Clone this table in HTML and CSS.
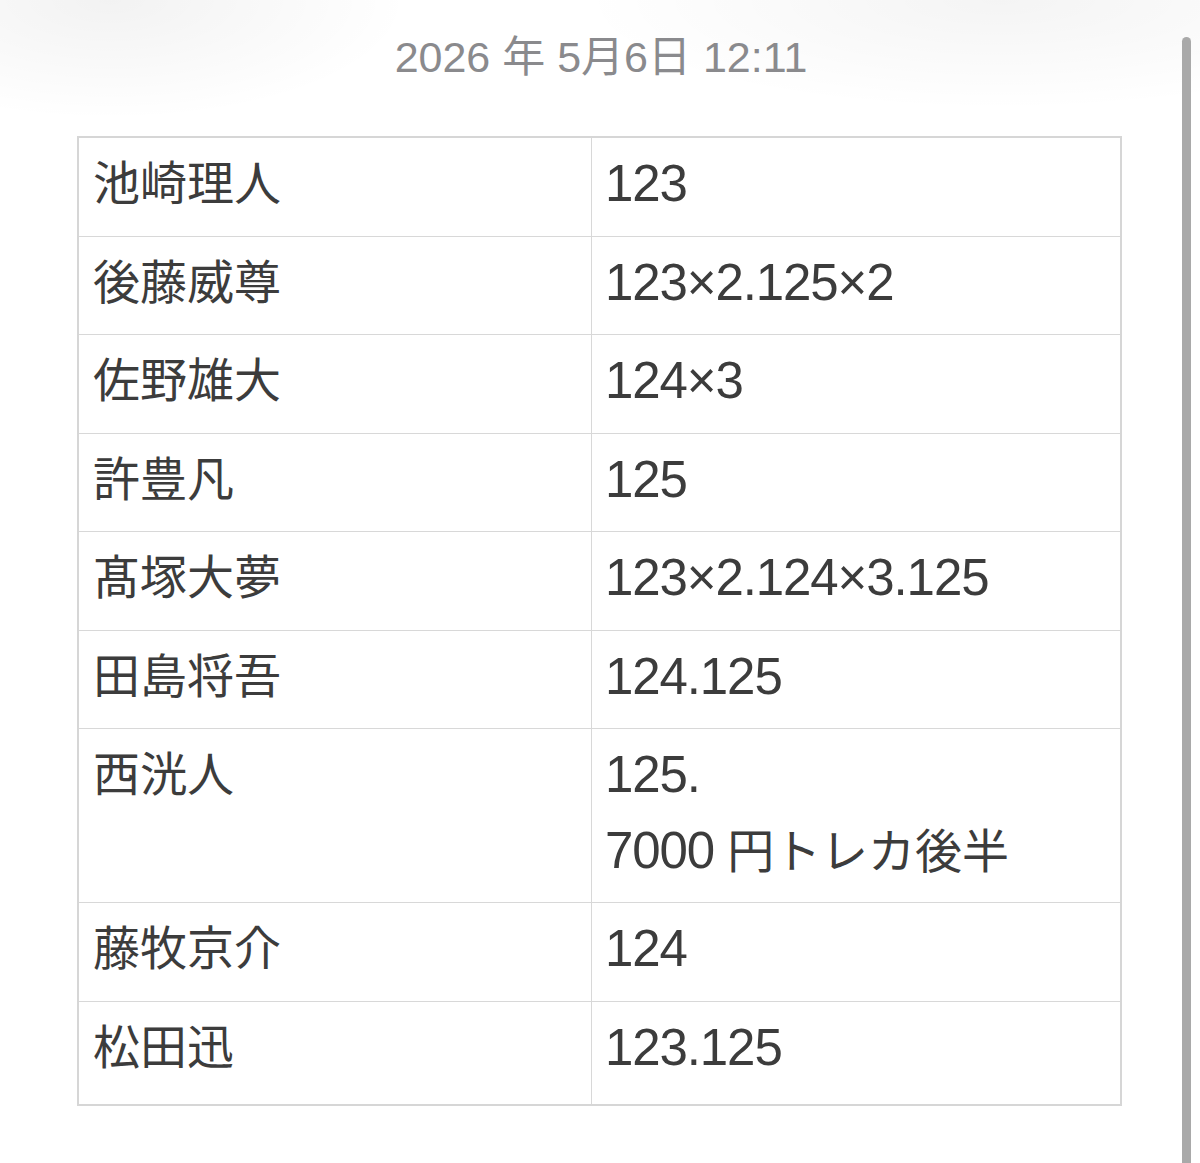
FILE: index.html
```html
<!DOCTYPE html>
<html lang="ja">
<head>
<meta charset="utf-8">
<title>メモ</title>
<link rel="stylesheet" href="styles.css">
</head>
<body>
<div class="page">
  <div class="date">2026 年 5月6日 12:11</div>
  <table class="sheet">
    <tr><td class="name">池崎理人</td><td class="val">123</td></tr>
    <tr><td class="name">後藤威尊</td><td class="val">123×2.125×2</td></tr>
    <tr><td class="name">佐野雄大</td><td class="val">124×3</td></tr>
    <tr><td class="name">許豊凡</td><td class="val">125</td></tr>
    <tr><td class="name">髙塚大夢</td><td class="val">123×2.124×3.125</td></tr>
    <tr><td class="name">田島将吾</td><td class="val">124.125</td></tr>
    <tr><td class="name">西洸人</td><td class="val">125.<br>7000 <span class="jp">円トレカ後半</span></td></tr>
    <tr><td class="name">藤牧京介</td><td class="val">124</td></tr>
    <tr class="last"><td class="name">松田迅</td><td class="val">123.125</td></tr>
  </table>
</div>
<div class="scrollbar"></div>
</body>
</html>
```
FILE: styles.css
```css
html, body {
  margin: 0;
  padding: 0;
}
body {
  width: 1200px;
  height: 1163px;
  overflow: hidden;
  position: relative;
  background:
    radial-gradient(ellipse 300px 120px at 110px 0px, rgba(0,0,0,0.05), rgba(0,0,0,0) 100%),
    radial-gradient(ellipse 420px 110px at 1000px 0px, rgba(0,0,0,0.045), rgba(0,0,0,0) 100%),
    #ffffff;
  font-family: "Noto Sans CJK JP", "Noto Sans", sans-serif;
}
.page {
  display: flex;
  flex-direction: column;
  align-items: flex-start;
  padding-top: 31px;
}
.date {
  align-self: stretch;
  text-align: center;
  font-family: "Liberation Sans", "Noto Sans CJK JP", sans-serif;
  font-size: 43px;
  line-height: 53px;
  color: #8a8a8d;
  padding-left: 2px;
}
.sheet {
  margin-top: 52px;
  margin-left: 77px;
  width: 1045px;
  border-collapse: collapse;
  border: 2px solid #d6d6d6;
  color: #3c3c3c;
  line-height: 75.5px;
}
.sheet td {
  border: 1px solid #d8d8d8;
  vertical-align: top;
  font-weight: 400;
}
.sheet td.name {
  width: 482px;
  padding: 4px 16px 18px 14px;
  font-size: 47px;
  font-family: "Noto Sans CJK JP", sans-serif;
}
.sheet td.val {
  padding: 8px 16px 14px 13px;
  font-size: 51px;
  letter-spacing: -1.1px;
  font-family: "Liberation Sans", "Noto Sans CJK JP", sans-serif;
}
.sheet .last td.name {
  padding-bottom: 23px;
}
.sheet .last td.val {
  padding-bottom: 19px;
}
.sheet .jp {
  font-family: "Noto Sans CJK JP", sans-serif;
  font-size: 47px;
  letter-spacing: 0;
  line-height: 1;
}
.scrollbar {
  position: absolute;
  left: 1182px;
  top: 37px;
  width: 9px;
  bottom: -10px;
  border-radius: 5px;
  background: #a9a9a9;
}
```
